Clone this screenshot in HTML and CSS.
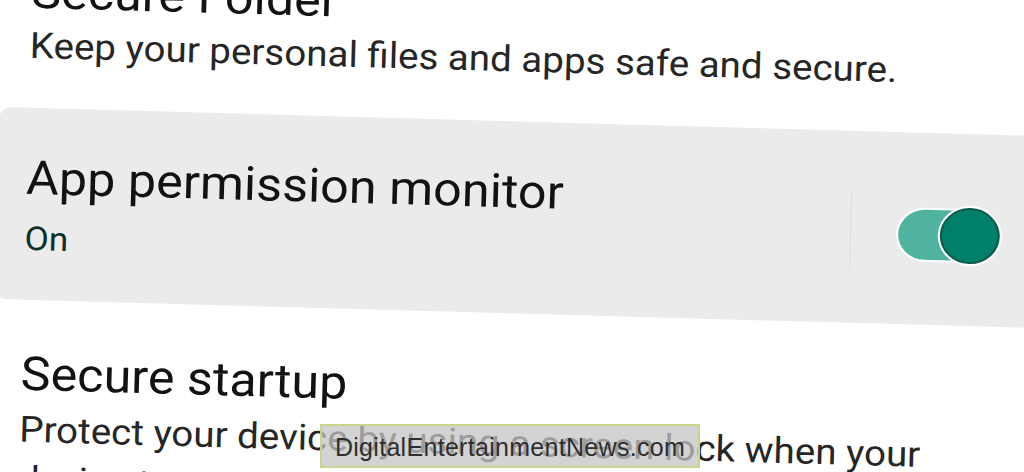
FILE: index.html
```html
<!DOCTYPE html>
<html lang="en">
<head>
  <meta charset="UTF-8" />
  <meta name="viewport" content="width=device-width, initial-scale=1.0"/>
  <title>Security settings</title>
  <link rel="stylesheet" href="styles.css">
</head>
<body>

  <div class="screen">
    <div class="pref first">
      <div class="pref-title">Secure Folder</div>
      <div class="pref-summary">Keep your personal files and apps safe and secure.</div>
    </div>

    <div class="pref highlighted">
      <div class="pref-text">
        <div class="pref-title">App permission monitor</div>
        <div class="pref-status">On</div>
      </div>
      <div class="divider"></div>
      <div class="switch">
        <div class="thumb"></div>
      </div>
    </div>

    <div class="pref">
      <div class="pref-title">Secure startup</div>
      <div class="pref-summary">Protect your device by using a screen lock when your device turns on.</div>
    </div>
  </div>

  <div class="watermark">DigitalEntertainmentNews.com</div>

</body>
</html>
```

FILE: styles.css
```css
body {
  font-family: Roboto, "Liberation Sans", sans-serif;
  background: #fff;
  margin: 0;
  width: 1024px;
  height: 472px;
  overflow: hidden;
  position: relative;
}

/* the shot is slightly tilted and stretched */
.screen {
  width: 1000px;
  transform-origin: 0 236px;
  transform: rotate(1.6deg) scaleX(1.07);
}

.pref {
  padding: 0 24px;
}

.pref.first {
  margin-top: -38px;
}

.pref-title {
  font-size: 47px;
  line-height: 58px;
  color: #121212;
  white-space: nowrap;
}

.pref-summary {
  font-size: 36px;
  line-height: 50px;
  color: #262626;
  max-width: 900px;
}

.pref + .pref .pref-summary {
  margin-top: 2px;
}

.highlighted {
  margin-top: 37px;
  margin-left: -3px;
  height: 192px;
  background: #ebebeb;
  border-radius: 12px;
  display: flex;
  align-items: center;
  padding: 0 70px 0 27px;
}

.highlighted + .pref {
  margin-top: 45px;
}

.pref-text {
  flex: 1;
}

.pref-status {
  margin-top: 12px;
  font-size: 33px;
  line-height: 40px;
  color: #0b3128;
}

.divider {
  width: 1px;
  height: 80px;
  margin-top: 6px;
  margin-right: 44px;
  background: #dedede;
}

.switch {
  width: 90px;
  height: 50px;
  margin-top: 12px;
  border-radius: 25px;
  background: #4fb3a0;
  box-shadow: 0 0 0 2px #fff;
  display: flex;
  justify-content: flex-end;
  align-items: center;
}

.thumb {
  width: 52px;
  height: 52px;
  margin-right: -5px;
  border-radius: 50%;
  background: #00806a;
  border: 2px solid #0a5b4a;
  box-shadow: 0 0 0 2px #fff;
}

.watermark {
  position: absolute;
  left: 320px;
  top: 424px;
  width: 376px;
  height: 40px;
  border: 2px solid #c9d48c;
  background: rgba(196, 196, 196, 0.75);
  font-family: "Liberation Sans", sans-serif;
  font-size: 25px;
  line-height: 42px;
  letter-spacing: 0.3px;
  color: #2e2e2e;
  text-align: center;
}
```
